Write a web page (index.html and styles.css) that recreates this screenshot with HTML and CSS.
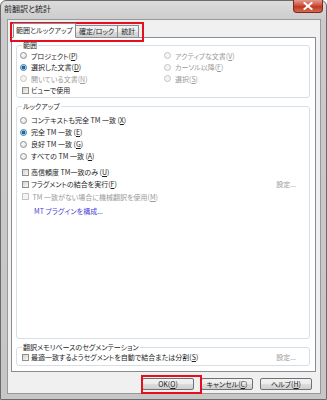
FILE: index.html
```html
<!DOCTYPE html>
<html lang="ja">
  <head>
    <meta charset="utf-8">
    <title>前翻訳と統計</title>
    <link rel="stylesheet" href="styles.css">
  </head>
  <body>
    <div class="window">
      <div class="titlebar">
        <span class="title">前翻訳と統計</span>
        <span class="close">
          <svg width="10" height="8" viewBox="0 0 10 8">
            <path d="M1.5 1 L8.5 7 M8.5 1 L1.5 7" stroke="#fff" stroke-width="2" stroke-linecap="square"/>
          </svg>
        </span>
      </div>

      <div class="client">
        <div class="tabs">
          <span class="tab selected">範囲とルックアップ</span>
          <span class="tab">確定/ロック</span>
          <span class="tab">統計</span>
        </div>

        <div class="panel">
          <fieldset class="group scope">
            <legend>範囲</legend>
            <div class="cols">
              <div class="col first">
                <div class="row"><span class="radio"></span>プロジェクト(<u>P</u>)</div>
                <div class="row"><span class="radio on"></span>選択した文書(<u>D</u>)</div>
                <div class="row off"><span class="radio"></span>開いている文書(<u>N</u>)</div>
                <div class="row"><span class="check"></span>ビューで使用</div>
              </div>
              <div class="col">
                <div class="row off"><span class="radio"></span>アクティブな文書(<u>V</u>)</div>
                <div class="row off"><span class="radio"></span>カーソル以降(<u>F</u>)</div>
                <div class="row off"><span class="radio"></span>選択(<u>S</u>)</div>
              </div>
            </div>
          </fieldset>

          <fieldset class="group lookup">
            <legend>ルックアップ</legend>
            <div class="row"><span class="radio"></span>コンテキストも完全 TM 一致 (<u>X</u>)</div>
            <div class="row"><span class="radio on"></span>完全 TM 一致 (<u>E</u>)</div>
            <div class="row"><span class="radio"></span>良好 TM 一致 (<u>G</u>)</div>
            <div class="row"><span class="radio"></span>すべての TM 一致 (<u>A</u>)</div>
            <div class="row gap"><span class="check"></span>高信頼度 TM一致のみ (<u>U</u>)</div>
            <div class="row"><span class="check"></span>フラグメントの結合を実行(<u>F</u>)<span class="setting">設定...</span></div>
            <div class="row off tall"><span class="check"></span>&nbsp;TM 一致がない場合に機械翻訳を使用(<u>M</u>)</div>
            <div class="row link">MT プラグインを構成...</div>
          </fieldset>

          <fieldset class="group seg">
            <legend>翻訳メモリベースのセグメンテーション</legend>
            <div class="row"><span class="check"></span>最適一致するようセグメントを自動で結合または分割(<u>S</u>)<span class="setting">設定...</span></div>
          </fieldset>
        </div>

        <div class="buttons">
          <span class="button">OK(<u>O</u>)</span>
          <span class="button">キャンセル(<u>C</u>)</span>
          <span class="button">ヘルプ(<u>H</u>)</span>
        </div>
      </div>

      <div class="mark mark-tabs"></div>
      <div class="mark mark-ok"></div>
    </div>
  </body>
</html>
```

FILE: styles.css
```css
html, body {
  margin: 0;
  padding: 0;
}
body {
  width: 327px;
  height: 400px;
  overflow: hidden;
  background: #fff;
  font-family: "Noto Sans CJK JP", "Noto Sans", sans-serif;
  font-feature-settings: "palt" 1;
  font-size: 7px;
  color: #1e1e1e;
}
u {
  text-decoration-thickness: 1px;
  text-underline-offset: 1px;
}

.window {
  position: relative;
  box-sizing: border-box;
  width: 327px;
  height: 400px;
  border: 1px solid #6b6b6b;
  border-radius: 6px 6px 0 0;
  background: linear-gradient(#dcdcdc, #cbcbcb 20px, #c6c6c6);
  padding: 0 5px 5px 6px;
  display: flex;
  flex-direction: column;
}

.titlebar {
  height: 18px;
  display: flex;
  align-items: flex-start;
  justify-content: space-between;
}
.title {
  font-size: 8px;
  line-height: 16px;
  margin-left: -3px;
  color: #262626;
}
.close {
  width: 30px;
  height: 13px;
  margin-top: -1px;
  margin-right: -2px;
  box-sizing: border-box;
  border: 1px solid #7a2a20;
  border-top: none;
  border-radius: 0 0 4px 4px;
  background: linear-gradient(#e29c8f, #d0513d 45%, #bb3a24 55%, #d86a4c);
  display: flex;
  align-items: center;
  justify-content: center;
}

.client {
  flex: 1;
  box-sizing: border-box;
  border: 1px solid #999;
  background: #f0f0f0;
  padding: 3px 4px 3px 3px;
  display: flex;
  flex-direction: column;
}

.tabs {
  display: flex;
  align-items: flex-end;
  padding-left: 2px;
  height: 14px;
  position: relative;
  z-index: 1;
}
.tab {
  height: 12px;
  box-sizing: border-box;
  border: 1px solid #898c95;
  border-bottom: none;
  background: linear-gradient(#f3f3f3, #ebebeb 50%, #dddddd 50%, #cfcfcf);
  padding: 0 3px;
  line-height: 11px;
  margin-left: -1px;
}
.tab.selected {
  margin-left: 0;
  padding: 0 2px;
  background: #fff;
  line-height: 13px;
  border-bottom: 1px solid #fff;
  height: 15px;
  margin-bottom: -1px;
  position: relative;
  z-index: 1;
}

.panel {
  flex: 1;
  box-sizing: border-box;
  border: 1px solid #898c95;
  background: #fff;
  padding: 3px 5px 5px 4px;
  display: flex;
  flex-direction: column;
  gap: 4px;
}

.group {
  margin: 0;
  border: 1px solid #d5dfe5;
  border-radius: 3px;
  padding: 0 0 1px 3px;
  min-width: 0;
}
.group legend {
  padding: 0 1px;
  margin-left: 2px;
  line-height: 9px;
  color: #1e1e1e;
}
.group.lookup {
  flex: 1;
  padding-top: 3px;
}
.group.seg {
  padding-bottom: 2px;
}

.cols {
  display: flex;
}
.col.first {
  width: 144px;
}

.row {
  height: 11.5px;
  display: flex;
  align-items: center;
  white-space: nowrap;
}
.lookup .row {
  height: 12px;
}
.lookup .row.gap {
  margin-top: 4px;
}
.lookup .row.tall {
  height: 13px;
}
.lookup .row.link {
  height: 16px;
  padding-left: 14px;
  color: #4a3fd6;
}
.row.off {
  color: #9a9a9a;
}

.radio {
  width: 7px;
  height: 7px;
  box-sizing: border-box;
  border: 1px solid #8f8f8f;
  border-radius: 50%;
  background: radial-gradient(circle at 40% 35%, #fdfdfd, #d8d8d8);
  margin-right: 4px;
  flex: none;
}
.radio.on {
  background: radial-gradient(circle, #2f6fa8 0, #1f5d96 1.6px, #cfe3f3 2.2px, #eef5fb 3px);
  border-color: #3c7fb1;
}
.row.off .radio {
  border-color: #c4c4c4;
  background: #f4f4f4;
}
.check {
  width: 7px;
  height: 7px;
  box-sizing: border-box;
  border: 1px solid #8f8f8f;
  background: linear-gradient(135deg, #d3d3d3, #f8f8f8);
  margin-left: 2px;
  margin-right: 2px;
  flex: none;
}
.row.off .check {
  border-color: #c4c4c4;
  background: #f4f4f4;
}

.setting {
  margin-left: auto;
  margin-right: 13px;
  color: #9a9a9a;
}

.buttons {
  height: 12px;
  margin-top: 6px;
  display: flex;
  justify-content: flex-end;
  gap: 7px;
  padding-right: 4px;
}
.button {
  width: 52px;
  box-sizing: border-box;
  border: 1px solid #707070;
  border-radius: 2px;
  background: linear-gradient(#f2f2f2, #ebebeb 50%, #dddddd 50%, #cfcfcf);
  text-align: center;
  line-height: 10px;
}

.mark {
  position: absolute;
  border: 2px solid #e5101e;
}
.mark-tabs {
  left: 9px;
  top: 21px;
  width: 130px;
  height: 16px;
}
.mark-ok {
  left: 140px;
  top: 374px;
  width: 57px;
  height: 15px;
}
```
